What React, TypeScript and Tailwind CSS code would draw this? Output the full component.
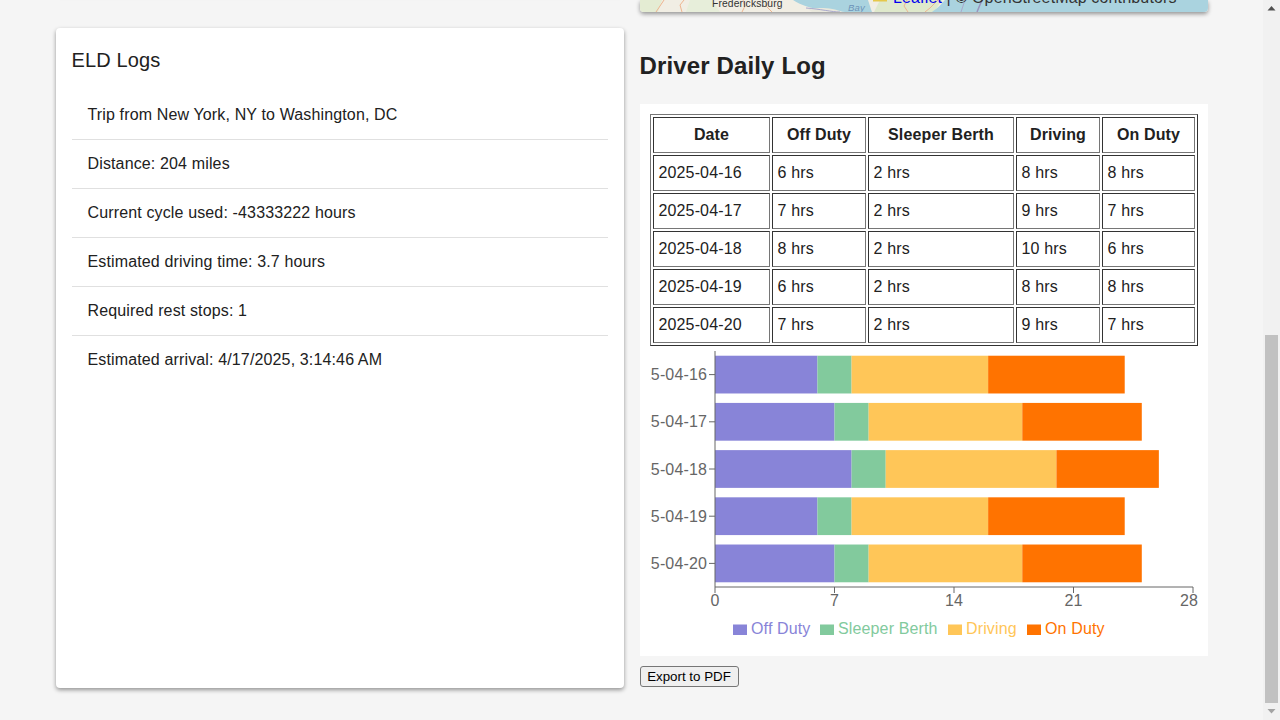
import React from "react";

const rows = [
  { date: "2025-04-16", off: 6, sleeper: 2, driving: 8, on: 8 },
  { date: "2025-04-17", off: 7, sleeper: 2, driving: 9, on: 7 },
  { date: "2025-04-18", off: 8, sleeper: 2, driving: 10, on: 6 },
  { date: "2025-04-19", off: 6, sleeper: 2, driving: 8, on: 8 },
  { date: "2025-04-20", off: 7, sleeper: 2, driving: 9, on: 7 },
];

const logItems = [
  "Trip from New York, NY to Washington, DC",
  "Distance: 204 miles",
  "Current cycle used: -43333222 hours",
  "Estimated driving time: 3.7 hours",
  "Required rest stops: 1",
  "Estimated arrival: 4/17/2025, 3:14:46 AM",
];

const series = [
  { key: "off", label: "Off Duty", color: "#8884d8", iconX: 733 },
  { key: "sleeper", label: "Sleeper Berth", color: "#82ca9d", iconX: 820 },
  { key: "driving", label: "Driving", color: "#ffc658", iconX: 948 },
  { key: "on", label: "On Duty", color: "#ff7300", iconX: 1027 },
] as const;

const cellClass =
  "h-9 border border-solid border-t-[#333333] border-l-[#333333] border-r-[#767676] border-b-[#767676] px-[5px] text-left font-normal";
const headClass =
  "h-9 border border-solid border-t-[#333333] border-l-[#333333] border-r-[#767676] border-b-[#767676] pl-[6px] pr-[5px] text-center font-bold";

const MapStrip = () => (
  <svg className="block h-3 w-full" viewBox="640 0 568 12">
    <rect x="640" y="0" width="568" height="12" fill="#f1eee4" />
    <path d="M640 0h22l-4 12h-18z" fill="#e4ecd3" />
    <path d="M690 0h22l8 12h-34z" fill="#e7eeda" />
    <path d="M880 0h62l-8 12h-60z" fill="#dfe9cc" />
    <path d="M793 0C800 5 812 9 826 10L845 12H1208V0H945C940 6 936 9 932 12H872C870 6 869 3 868 0Z" fill="#aad3df" />
    <path d="M808 9C820 7 834 8 842 12H812Z" fill="#e9e8dc" />
    <path d="M664 0L660 6L656 12M684 0L680 5L682 12M743 0L745 6L742 12M770 0L766 6L772 12M907 0L904 6L908 12M938 0L930 8L925 12" fill="none" stroke="#eeb48f" strokeWidth="1" />
    <path d="M982 0L977 12" stroke="#9a93bd" strokeWidth="1.5" fill="none" />
    <path d="M965 0L961 12" stroke="#a9a8cc" strokeWidth="1" fill="none" />
    <path d="M806 8C820 9 832 12 840 12" stroke="#a9a8cc" strokeWidth="1" fill="none" />
    <text x="712" y="7" fontSize="10.3" fill="#333333">
      Fredericksburg
    </text>
    <text x="848" y="11" fontSize="9.5" fontStyle="italic" fill="#6d94b8">
      Bay
    </text>
    <rect x="873" y="0" width="14" height="1.5" fill="#e6c84a" />
    <text x="893" y="3" fontSize="16" fill="#333333">
      <tspan fill="#0000ee">Leaflet</tspan> | © OpenStreetMap contributors
    </text>
  </svg>
);

const DutyChart = () => {
  const left = 715;
  const unit = 478 / 28;
  const top = 351;
  const band = 47.2;
  return (
    <svg className="block h-[300px] w-[548px]" viewBox="650 346 548 300" fontSize="16">
      {rows.map((row, i) => {
        let start = 0;
        const y = top + band * i + 4.72;
        return (
          <g key={row.date}>
            {series.map((s) => {
              const value = row[s.key];
              const x = left + start * unit;
              start += value;
              return <rect key={s.key} x={x} y={y} width={value * unit} height={37.76} fill={s.color} />;
            })}
            <line x1={709} x2={715} y1={top + band * i + 23.6} y2={top + band * i + 23.6} stroke="#666666" />
            <text x={707} y={top + band * i + 29.15} textAnchor="end" fill="#666666">
              {row.date}
            </text>
          </g>
        );
      })}
      <line x1={715} x2={715} y1={351} y2={587} stroke="#666666" />
      <line x1={715} x2={1193} y1={587} y2={587} stroke="#666666" />
      {[0, 7, 14, 21, 28].map((tick) => (
        <g key={tick}>
          <line x1={left + tick * unit} x2={left + tick * unit} y1={587} y2={593} stroke="#666666" />
          <text x={tick === 28 ? 1189 : left + tick * unit} y={606} textAnchor="middle" fill="#666666">
            {tick}
          </text>
        </g>
      ))}
      {series.map((s) => (
        <g key={s.key}>
          <rect x={s.iconX} y={624.5} width={14} height={10.5} fill={s.color} />
          <text x={s.iconX + 18} y={634} fill={s.color}>
            {s.label}
          </text>
        </g>
      ))}
    </svg>
  );
};

const Scrollbar = () => (
  <div className="flex w-[17px] shrink-0 flex-col bg-[#f1f1f1]">
    <div className="flex h-[17px] items-center justify-center">
      <svg width="9" height="5" viewBox="0 0 9 5">
        <path d="M4.5 0L8.5 4.5H0.5Z" fill="#505050" />
      </svg>
    </div>
    <div className="h-[318px]" />
    <div className="mx-[2px] h-[368px] bg-[#c1c1c1]" />
    <div className="flex h-[17px] items-center justify-center">
      <svg width="9" height="5" viewBox="0 0 9 5">
        <path d="M4.5 4.5L8.5 0H0.5Z" fill="#a3a3a3" />
      </svg>
    </div>
  </div>
);

export default function App() {
  return (
    <div className="flex h-screen overflow-hidden bg-[#f5f5f5] font-['Liberation_Sans',Arial,sans-serif] text-base leading-6 tracking-[0.14px] text-[#212121]">
      <div className="min-w-0 flex-1 px-[55.5px]">
        <div className="grid grid-cols-2 gap-x-4 gap-y-4">
          <div className="-mt-[10px] h-[4px] rounded-b bg-white shadow-[0_2px_4px_rgba(0,0,0,0.3)]" />
          <div className="h-3 overflow-hidden rounded-b shadow-[0_2px_4px_rgba(0,0,0,0.4)]">
            <MapStrip />
          </div>

          <section className="rounded bg-white p-4 shadow-[0_2px_4px_rgba(0,0,0,0.4)]">
            <h2 className="text-xl leading-8 font-normal">ELD Logs</h2>
            <ul className="mt-[15px]">
              {logItems.map((item, i) => (
                <li
                  key={item}
                  className={
                    i < logItems.length - 1
                      ? "border-b border-solid border-[#e0e0e0] px-4 py-3"
                      : "px-4 py-3"
                  }
                >
                  {item}
                </li>
              ))}
            </ul>
          </section>

          <section>
            <h2 className="py-[22px] text-2xl leading-8 font-bold">Driver Daily Log</h2>
            <div className="bg-white p-[10px]">
              <table className="w-[548px] table-fixed border-separate border-spacing-[2px] border border-solid border-t-[#767676] border-l-[#767676] border-r-[#333333] border-b-[#333333]">
                <colgroup>
                  <col className="w-[117px]" />
                  <col className="w-[94px]" />
                  <col className="w-[146px]" />
                  <col className="w-[84px]" />
                  <col className="w-[93px]" />
                </colgroup>
                <thead>
                  <tr>
                    {["Date", "Off Duty", "Sleeper Berth", "Driving", "On Duty"].map((h) => (
                      <th key={h} className={headClass}>
                        {h}
                      </th>
                    ))}
                  </tr>
                </thead>
                <tbody>
                  {rows.map((row) => (
                    <tr key={row.date}>
                      <td className={cellClass}>{row.date}</td>
                      <td className={cellClass}>{row.off} hrs</td>
                      <td className={cellClass}>{row.sleeper} hrs</td>
                      <td className={cellClass}>{row.driving} hrs</td>
                      <td className={cellClass}>{row.on} hrs</td>
                    </tr>
                  ))}
                </tbody>
              </table>
              <DutyChart />
            </div>
            <button className="mt-[10px] mb-px block h-[21px] w-[99px] rounded-[3px] border border-solid border-[#767676] bg-[#efefef] text-center text-[13.33px] leading-none tracking-normal text-black">
              Export to PDF
            </button>
          </section>
        </div>
      </div>
      <Scrollbar />
    </div>
  );
}
